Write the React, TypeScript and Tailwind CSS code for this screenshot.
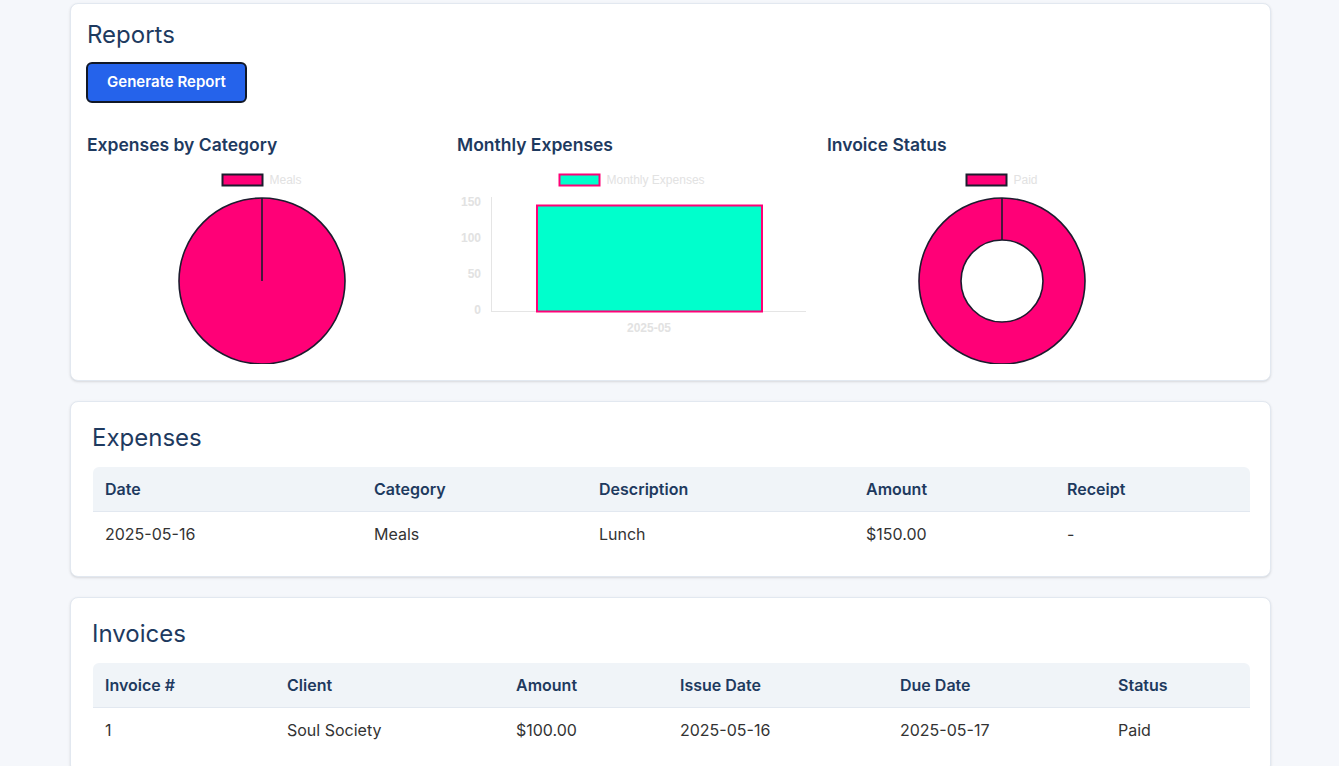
const PINK = '#ff0077'
const DARK = '#1c1c2e'
const CYAN = '#00ffcc'
const LABEL = '#e2e2e2'

const expenses = [
  { date: '2025-05-16', category: 'Meals', description: 'Lunch', amount: '$150.00', receipt: '-' },
]

const invoices = [
  { no: '1', client: 'Soul Society', amount: '$100.00', issue: '2025-05-16', due: '2025-05-17', status: 'Paid' },
]

const Legend = ({ x, label, fill, stroke }: { x: number; label: string; fill: string; stroke: string }) => (
  <g>
    <rect x={x} y={7.5} width={40} height={11} fill={fill} stroke={stroke} strokeWidth={2} />
    <text x={x + 47} y={17} fontSize={12} fill={LABEL} fontFamily="'Liberation Sans', Arial, sans-serif">
      {label}
    </text>
  </g>
)

const PieChart = () => (
  <svg width={350} height={197} viewBox="0 0 350 197">
    <Legend x={135.5} label="Meals" fill={PINK} stroke={DARK} />
    <circle cx={175} cy={114} r={83} fill={PINK} stroke={DARK} strokeWidth={1.6} />
    <line x1={175} y1={114} x2={175} y2={31} stroke={DARK} strokeWidth={1.6} />
  </svg>
)

const BarChart = () => {
  const ticks = [
    { v: '150', y: 35 },
    { v: '100', y: 71 },
    { v: '50', y: 107 },
    { v: '0', y: 143 },
  ]
  return (
    <svg width={350} height={197} viewBox="0 0 350 197">
      <Legend x={102.5} label="Monthly Expenses" fill={CYAN} stroke={PINK} />
      {ticks.map((t) => (
        <text
          key={t.v}
          x={24}
          y={t.y + 4}
          textAnchor="end"
          fontSize={12}
          fontWeight={700}
          fill={LABEL}
          fontFamily="'Liberation Sans', Arial, sans-serif"
        >
          {t.v}
        </text>
      ))}
      <line x1={34.5} y1={30} x2={34.5} y2={144.5} stroke="#e5e5e5" strokeWidth={1} />
      <line x1={34} y1={144.5} x2={349} y2={144.5} stroke="#e5e5e5" strokeWidth={1} />
      <rect x={80} y={38.5} width={225} height={106} fill={CYAN} stroke={PINK} strokeWidth={2} />
      <text
        x={192}
        y={165}
        textAnchor="middle"
        fontSize={12}
        fontWeight={700}
        fill={LABEL}
        fontFamily="'Liberation Sans', Arial, sans-serif"
      >
        2025-05
      </text>
    </svg>
  )
}

const DonutChart = () => (
  <svg width={350} height={197} viewBox="0 0 350 197">
    <Legend x={139.5} label="Paid" fill={PINK} stroke={DARK} />
    <circle cx={175} cy={114} r={83} fill={PINK} stroke={DARK} strokeWidth={1.6} />
    <circle cx={175} cy={114} r={41} fill="#ffffff" stroke={DARK} strokeWidth={1.6} />
    <line x1={175} y1={73} x2={175} y2={31} stroke={DARK} strokeWidth={1.6} />
  </svg>
)

const ChartBox = ({ title, children }: { title: string; children: React.ReactNode }) => (
  <div className="w-[350px] flex flex-col">
    <h3 className="text-[17.5px] leading-6 font-semibold text-[#1e3a5f] mb-[10px]">{title}</h3>
    {children}
  </div>
)

const Th = ({ children, w }: { children: React.ReactNode; w: string }) => (
  <th className={`${w} text-left px-3 py-3 leading-5 text-[16px] font-semibold text-[#1e3a5f]`}>{children}</th>
)

const Td = ({ children }: { children: React.ReactNode }) => (
  <td className="px-3 py-3 leading-5 text-[16px] text-[#333333]">{children}</td>
)

const App = () => {
  return (
    <div className="min-h-screen bg-[#f5f7fb] pt-[3px] pb-10 font-['Inter','Noto_Sans',sans-serif]">
      <div className="w-[1201px] ml-[70px] flex flex-col gap-5">
        <section className="bg-white border border-[#e2e8f0] rounded-lg shadow-sm p-4">
          <h2 className="text-[24px] leading-8 font-normal text-[#1e3a5f] -mt-px mb-[11px]">Reports</h2>
          <button className="w-[161px] h-[41px] -ml-px bg-[#2563eb] border-2 border-[#111827] rounded-md text-white text-[15px] font-semibold">
            Generate Report
          </button>
          <div className="flex gap-5 mt-[30px]">
            <ChartBox title="Expenses by Category">
              <PieChart />
            </ChartBox>
            <ChartBox title="Monthly Expenses">
              <BarChart />
            </ChartBox>
            <ChartBox title="Invoice Status">
              <DonutChart />
            </ChartBox>
          </div>
        </section>

        <section className="bg-white border border-[#e2e8f0] rounded-lg shadow-sm py-5 pl-[22px] pr-5">
          <h2 className="text-[24px] leading-8 font-normal text-[#1e3a5f] -ml-px mb-[13px]">Expenses</h2>
          <table className="w-full border-collapse">
            <thead>
              <tr className="bg-[#f0f4f8] border-b border-[#e2e8f0]">
                <Th w="w-[269px] rounded-tl-md">Date</Th>
                <Th w="w-[225px]">Category</Th>
                <Th w="w-[267px]">Description</Th>
                <Th w="w-[201px]">Amount</Th>
                <Th w="rounded-tr-md">Receipt</Th>
              </tr>
            </thead>
            <tbody>
              {expenses.map((e) => (
                <tr key={e.date}>
                  <Td>{e.date}</Td>
                  <Td>{e.category}</Td>
                  <Td>{e.description}</Td>
                  <Td>{e.amount}</Td>
                  <Td>{e.receipt}</Td>
                </tr>
              ))}
            </tbody>
          </table>
        </section>

        <section className="bg-white border border-[#e2e8f0] rounded-lg shadow-sm py-5 pl-[22px] pr-5">
          <h2 className="text-[24px] leading-8 font-normal text-[#1e3a5f] -ml-px mb-[13px]">Invoices</h2>
          <table className="w-full border-collapse">
            <thead>
              <tr className="bg-[#f0f4f8] border-b border-[#e2e8f0]">
                <Th w="w-[182px] rounded-tl-md">Invoice #</Th>
                <Th w="w-[229px]">Client</Th>
                <Th w="w-[164px]">Amount</Th>
                <Th w="w-[220px]">Issue Date</Th>
                <Th w="w-[218px]">Due Date</Th>
                <Th w="rounded-tr-md">Status</Th>
              </tr>
            </thead>
            <tbody>
              {invoices.map((i) => (
                <tr key={i.no}>
                  <Td>{i.no}</Td>
                  <Td>{i.client}</Td>
                  <Td>{i.amount}</Td>
                  <Td>{i.issue}</Td>
                  <Td>{i.due}</Td>
                  <Td>{i.status}</Td>
                </tr>
              ))}
            </tbody>
          </table>
        </section>
      </div>
    </div>
  )
}

export default App
